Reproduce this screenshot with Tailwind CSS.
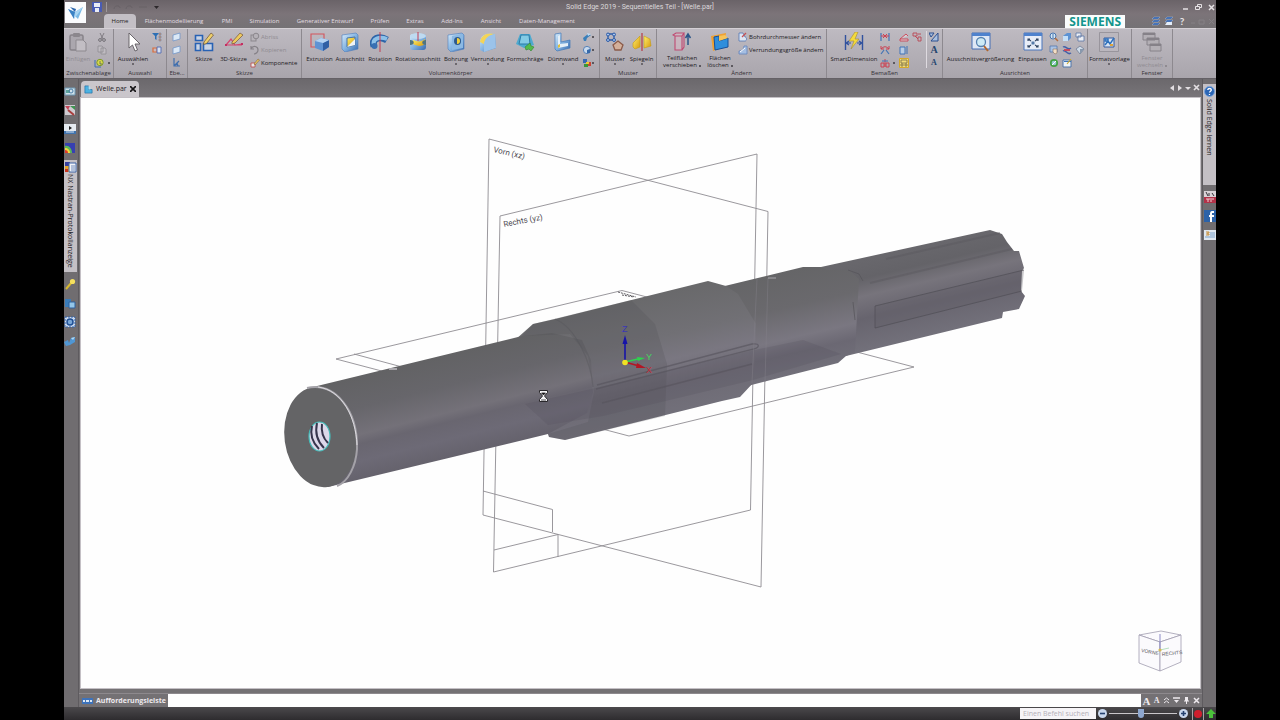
<!DOCTYPE html>
<html lang="de">
<head>
<meta charset="utf-8">
<meta name="viewport" content="width=device-width, initial-scale=1">
<title>Solid Edge 2019 - Sequentielles Teil - [Welle.par]</title>
<script src="https://cdn.jsdelivr.net/npm/@tailwindcss/browser@4"></script>
</head>
<body class="bg-black font-[Lato,'Liberation_Sans',sans-serif] text-[7px] leading-[8px] text-[#1d1a1e]">

<svg class="absolute size-0" aria-hidden="true">
  <defs>
    <linearGradient id="blue" x1="0" y1="0" x2="1" y2="1"><stop offset="0" stop-color="#d9ecfa"/><stop offset=".5" stop-color="#84b4e2"/><stop offset="1" stop-color="#3568ad"/></linearGradient>
    <linearGradient id="gold" x1="0" y1="0" x2="1" y2="1"><stop offset="0" stop-color="#fff06a"/><stop offset="1" stop-color="#d79a10"/></linearGradient>
  </defs>
  <symbol id="i-paste" viewBox="0 0 20 20"><rect x="2" y="3" width="13" height="15" rx="1.5" fill="#aba7ae" stroke="#878389" stroke-width="1.5"/><rect x="5" y="1" width="7" height="4" rx="1" fill="#8b878d"/><path d="M8 8h7l3 3v8H8z" fill="#c2bec4" stroke="#8d898f"/></symbol>
  <symbol id="i-cut" viewBox="0 0 10 10"><path d="M3 1l3 6M7 1L4 7" stroke="#807c82" fill="none"/><circle cx="3" cy="8" r="1.4" fill="none" stroke="#737076"/><circle cx="7" cy="8" r="1.4" fill="none" stroke="#737076"/></symbol>
  <symbol id="i-copy" viewBox="0 0 10 10"><path d="M1 1h4l1 1v5H1zM4 3h4l1 1v5H4z" fill="#bfbbc1" stroke="#918d93" stroke-width=".8"/></symbol>
  <symbol id="i-brush" viewBox="0 0 10 10"><path d="M1 2v7h6" fill="none" stroke="#3d6cb4"/><circle cx="6" cy="4.500" r="3.200" fill="#d9d84a" stroke="#7d9a2c"/><path d="M6 3v3h2" stroke="#456" fill="none" stroke-width=".7"/></symbol>
  <symbol id="i-arrow" viewBox="0 0 20 20"><path d="M6 1v15l3.500-3 2.500 6 2.500-1-2.500-6h5z" fill="#fff" stroke="#5d595f" stroke-width=".9"/></symbol>
  <symbol id="i-filter" viewBox="0 0 10 10"><path d="M0 1h7L4.500 4v4L3 7V4z" fill="#2c6fb5"/><path d="M7 1h2v2H7zM7 4h2v2H7zM7 7h2v2H7z" fill="#d69a6e" stroke="#6378a4" stroke-width=".5"/></symbol>
  <symbol id="i-range" viewBox="0 0 10 10"><path d="M1 3h4v4H1z" fill="#c9b9bd" stroke="#db6d3a" stroke-width="1.200"/><path d="M5 2h4v6H5z" fill="#d9e0ee" stroke="#5b72b4"/></symbol>
  <symbol id="i-plane" viewBox="0 0 10 10"><path d="M1 3l7-2v6L1 9z" fill="#dbe8f6" stroke="#7196c8" stroke-width=".8"/></symbol>
  <symbol id="i-axes" viewBox="0 0 10 10"><path d="M2 0v8h6M2 8l5-5M5 5l1 3" fill="none" stroke="#416fae" stroke-width="1.200"/></symbol>
  <symbol id="i-sketch" viewBox="0 0 20 20"><path d="M1.500 3.500h7v5h-7zM1.500 11.500h5v7h-5zM9.500 11.500h9v7h-9z" fill="#c8d3e4" stroke="#2862b4" stroke-width="1.600"/><path d="M10 10l7-9 2.500 2-7 8.500-3 1z" fill="#efd06b" stroke="#695038" stroke-width=".7"/></symbol>
  <symbol id="i-sketch3" viewBox="0 0 20 20"><path d="M2 13l5-6 4 6 7-1M2 13h16" fill="none" stroke="#d5466f" stroke-width="1.200"/><path d="M1 12h2v2H1zM17 11h2v2h-2z" fill="#c32f63"/><path d="M8 10l8-9 3 2-8 8-3 1z" fill="#edc95d" stroke="#72543b" stroke-width=".7"/></symbol>
  <symbol id="i-ghost" viewBox="0 0 10 10"><rect x="1" y="3" width="5" height="6" fill="#b7b3b9" stroke="#8b878d"/><circle cx="6" cy="4" r="2.800" fill="#b5b1b7" stroke="#8b878d"/></symbol>
  <symbol id="i-ghost2" viewBox="0 0 10 10"><path d="M1 4c2-4 7-3 7 1 0 2-2 4-4 4M1 1v3h3" fill="none" stroke="#858187" stroke-width="1.200"/></symbol>
  <symbol id="i-comp" viewBox="0 0 10 10"><path d="M1 5h4v4H1z" fill="#e9e7e9" stroke="#bc4a4a" stroke-width=".8"/><path d="M4 6l4-5 1.500 1L5 7z" fill="#edc95d" stroke="#72543b" stroke-width=".5"/></symbol>
  <symbol id="i-extrude" viewBox="0 0 20 20"><path d="M1 2h13v13H1z" fill="none" stroke="#d4545c" stroke-width="1.100"/><path d="M5 9l6-3 8 2v7l-6 4-8-3z" fill="#5f93d3"/><path d="M13 11l6-3v7l-6 4z" fill="#2f5fa4"/><path d="M5 9l6-3 8 2-6 3z" fill="#b3d2f1"/></symbol>
  <symbol id="i-cutout" viewBox="0 0 20 20"><path d="M2 3l14-2 2 2v14l-13 3-3-3z" fill="url(#blue)" stroke="#4c7cbd" stroke-width=".6"/><path d="M7 6l8-1v8l-8 2z" fill="url(#gold)" stroke="#4773a8"/><path d="M7 15l8-8v6z" fill="#eef3f8"/></symbol>
  <symbol id="i-revolve" viewBox="0 0 20 20"><path d="M4 14C1 7 9 3 17 8" stroke="#2c65a9" stroke-width="7" fill="none"/><path d="M4 13C2 7 9 4 17 7" stroke="#8dc1e8" stroke-width="4" fill="none"/><circle cx="4.500" cy="14" r="3" fill="#3971b3"/><path d="M10 0v20" stroke="#c23c55"/></symbol>
  <symbol id="i-revcut" viewBox="0 0 20 20"><rect x="2" y="2" width="16" height="16" rx="3" fill="url(#blue)"/><ellipse cx="10" cy="4" rx="8" ry="3" fill="#bedaf0"/><path d="M5 8c5 2 8 2 12-1v5c-4 3-8 2-12 0z" fill="url(#gold)"/><path d="M2 8c5 0 5 5 0 5zM18 8c-5 0-5 5 0 5z" fill="#4f7482"/><path d="M10 0v9" stroke="#c23c55"/></symbol>
  <symbol id="i-hole" viewBox="0 0 20 20"><path d="M2 3l14-2 2 2v14l-13 3-3-3z" fill="url(#blue)" stroke="#4c7cbd" stroke-width=".6"/><path d="M6 4l11-2v14L6 18z" fill="#8bb9e4"/><ellipse cx="11.500" cy="9" rx="3.500" ry="4" fill="#2e5a8c"/><path d="M11 6a3 3 0 010 6z" fill="#f2cf3c"/></symbol>
  <symbol id="i-round" viewBox="0 0 20 20"><path d="M2 18V9C3 3 9 0 17 2l1 14-12 4z" fill="url(#blue)"/><path d="M2 10C3 3 9 0 17 2 11 3 7 6 6 12z" fill="#f3d458"/><path d="M6 12c1-6 5-9 11-10l1 14-12 4z" fill="#9bc3ea"/></symbol>
  <symbol id="i-draft" viewBox="0 0 20 20"><path d="M5 2h10l4 11-10 3-8-4z" fill="#4faacf"/><path d="M6 3h8l1 9H4z" fill="#83cbe5" stroke="#2b7aa8"/><path d="M10 15l5-4 1 3 3 1-3 4-2-2-3 1z" fill="#54bb4b" stroke="#308533" stroke-width=".6"/></symbol>
  <symbol id="i-thin" viewBox="0 0 20 20"><path d="M2 2l6-1v9l9-2v8L4 19l-2-2z" fill="url(#blue)" stroke="#4278b7" stroke-width=".7"/><path d="M5 4l2-1v9l8-1v3l-10 2z" fill="#e4eff8"/><path d="M5 13l2-1v3l-2 1z" fill="#dfc13d"/></symbol>
  <symbol id="i-blob1" viewBox="0 0 10 10"><path d="M1 6l5-4 3 1-4 3-1 3-2 0z" fill="#397fba"/><path d="M5 1l4 1-3 2z" fill="#c1daf0"/></symbol>
  <symbol id="i-blob2" viewBox="0 0 10 10"><circle cx="5" cy="5" r="3.600" fill="#c9daed" stroke="#5782b8"/><path d="M5 5l3-1v4H5z" fill="#3669a9"/></symbol>
  <symbol id="i-blob3" viewBox="0 0 10 10"><path d="M1 1h4v4H1z" fill="#3769b2"/><path d="M5 4h4v4H5z" fill="#ca4435"/><path d="M2 6h4v3H2z" fill="#39963a"/><path d="M4 4h3v2H4z" fill="#eccb32"/></symbol>
  <symbol id="i-pattern" viewBox="0 0 20 20"><path d="M3 2h6v6H3z" fill="none" stroke="#2e5ca8" stroke-width="1.300"/><g fill="#a8c4ea" stroke="#2e5ca8"><circle cx="3" cy="2.500" r="1.500"/><circle cx="9" cy="2.500" r="1.500"/><circle cx="3" cy="8" r="1.500"/><circle cx="9" cy="8" r="1.500"/></g><path d="M13 9l5 4-2 5h-6l-2-5z" fill="#d3b09b" stroke="#8b5b4a" stroke-width="1.300"/></symbol>
  <symbol id="i-mirror" viewBox="0 0 20 20"><path d="M1 11l7-7v11l-5 2-2-2z" fill="url(#gold)" stroke="#c59a13" stroke-width=".6"/><path d="M12 4l6 3 1 7-7 2z" fill="url(#gold)" stroke="#c59a13" stroke-width=".6"/><path d="M10 1v18" stroke="#b83a44" stroke-width="1.200"/></symbol>
  <symbol id="i-moveface" viewBox="0 0 20 20"><path d="M1 3l3-2h8l-2 3v14H3V4zM3 4h7M12 1v14l-2 3" fill="#d9b7c3" fill-opacity=".5" stroke="#bf4a72" stroke-width="1.100"/><path d="M16 13V3M13.500 6L16 2l2.500 4" stroke="#2b5688" stroke-width="1.500" fill="none"/></symbol>
  <symbol id="i-delface" viewBox="0 0 20 20"><path d="M1 4l15-3-2 14-11 4z" fill="#efa132"/><path d="M4 5l5-1v5l9-3v9L5 18z" fill="#2f8edc" stroke="#17509a"/><path d="M9 9l9-3-3-3-6 1z" fill="#f6c45a"/></symbol>
  <symbol id="i-dia" viewBox="0 0 10 10"><path d="M1 1v8h6c2 0 2-4 0-4L5 1z" fill="#dce5f2" stroke="#5076b4" stroke-width=".8"/><path d="M4 5l4-4" stroke="#c65155" stroke-width="1.200"/></symbol>
  <symbol id="i-rad" viewBox="0 0 10 10"><path d="M1 9V6c3 0 5-2 5-5h3v8z" fill="#a5bee2" stroke="#6284bd" stroke-width=".8"/><path d="M2 7l5-4" stroke="#fff"/></symbol>
  <symbol id="i-smart" viewBox="0 0 20 20"><path d="M1.500 3v15M18.500 3v15" stroke="#31529e" stroke-width="1.400"/><path d="M2 11h5M13 11h5M5 9l-3 2 3 2M15 9l3 2-3 2" stroke="#31529e" stroke-width="1.200" fill="none"/><path d="M11 0L5 9h5l-3 8 8-10h-4l3-7z" fill="#f5db3b" stroke="#a28b36" stroke-width=".6"/></symbol>
  <symbol id="i-dim1" viewBox="0 0 10 10"><path d="M1 1v8M9 1v8" stroke="#4274b6" stroke-width="1.200"/><path d="M1 4h8M3 2l4 4M7 2L3 6" stroke="#cc4152" fill="none"/></symbol>
  <symbol id="i-dim2" viewBox="0 0 10 10"><path d="M1 9l3-4M9 9L6 5" stroke="#4274b6" stroke-width="1.200"/><path d="M1 4c3-3 5-3 8 0M1 1v3h3M9 1v3H6" stroke="#cc4152" fill="none"/></symbol>
  <symbol id="i-dim3" viewBox="0 0 10 10"><path d="M1 5h3v4H1zM6 5h3v4H6zM5 1v8" stroke="#cc4152" fill="none"/><path d="M2 3h6" stroke="#4274b6"/></symbol>
  <symbol id="i-dim4" viewBox="0 0 10 10"><path d="M1 7l6-5 2 2M1 7h8v2H1z" stroke="#cc4152" fill="#d8ced3" stroke-width=".9"/></symbol>
  <symbol id="i-dim5" viewBox="0 0 10 10"><path d="M1 2h5v7H1zM8 1v8" stroke="#3f72b7" fill="#b9cce4"/></symbol>
  <symbol id="i-dim6" viewBox="0 0 10 10"><path d="M.5.500h9v9h-9z" fill="#f2dc7a" stroke="#d5a828"/><path d="M2 2h6v3H2zM2 6h2v2H2zM6 6h2v2H6z" fill="none" stroke="#7a6c44" stroke-width=".8"/></symbol>
  <symbol id="i-dim7" viewBox="0 0 10 10"><path d="M1 1h4v3H1zM6 5h3v4H6zM3 4l3 3M6 2h3" stroke="#bb4552" fill="none" stroke-width=".9"/></symbol>
  <symbol id="i-tri" viewBox="0 0 10 10"><path d="M0 1h5L2 5zM9 1v8H2z" fill="#a8c0e0" stroke="#2d4f8e"/></symbol>
  <symbol id="i-zoomarea" viewBox="0 0 20 20"><path d="M1 1h18v16H1z" fill="#dfe8f5" stroke="#446fb5"/><path d="M1 1h18v3H1z" fill="#4f82cd"/><circle cx="10" cy="10" r="4.500" fill="#cdeaf5" stroke="#5681b0" stroke-width="1.300"/><path d="M13 14l4 5" stroke="#b1662d" stroke-width="2"/></symbol>
  <symbol id="i-fit" viewBox="0 0 20 20"><path d="M1 1h18v17H1z" fill="#e8edf7" stroke="#4b76bd"/><path d="M1 1h18v3H1z" fill="#4f82cd"/><path d="M5 9V7h2M15 9V7h-2M5 13v2h2M15 13v2h-2M5 7l3 2M15 7l-3 2M5 15l3-2M15 15l-3-2" stroke="#314562" stroke-width="1.100" fill="none"/><path d="M8.500 9.500h3v3h-3z" fill="#5579a7"/></symbol>
  <symbol id="i-lens" viewBox="0 0 10 10"><circle cx="4" cy="4" r="3" fill="#d5e8f5" stroke="#4774b0"/><path d="M6 6l3 3" stroke="#b36b3a" stroke-width="1.500"/><path d="M4 2v4" stroke="#4774b0"/></symbol>
  <symbol id="i-cube" viewBox="0 0 10 10"><path d="M1 4l4-3h4v5L6 9H1z" fill="#5c92d3"/><path d="M1 4h5v5H1z" fill="#c5dff7"/></symbol>
  <symbol id="i-wins" viewBox="0 0 10 10"><path d="M1 1h5v4H1zM3 4h6v5H3z" fill="#eceef4" stroke="#5874a4" stroke-width=".8"/></symbol>
  <symbol id="i-hand" viewBox="0 0 10 10"><path d="M1 1h7v6H1z" fill="#aac3e4" stroke="#5577ab" stroke-width=".8"/><path d="M4 4h4v4l-2 1-2-2z" fill="#f3dfc6" stroke="#8b705c" stroke-width=".6"/></symbol>
  <symbol id="i-sym" viewBox="0 0 10 10"><path d="M1 2c3-2 4 4 8 1M1 6c3-2 4 5 8 2" stroke="#425fa9" stroke-width="1.500" fill="none"/><path d="M2 5h6" stroke="#cf4254" stroke-width="1.800"/></symbol>
  <symbol id="i-diam" viewBox="0 0 10 10"><path d="M1 4l4-3 4 3-4 5z" fill="#cfdbe8" stroke="#64748c" stroke-width=".7"/><path d="M5 4l4 0-4 5z" fill="#8798ad"/></symbol>
  <symbol id="i-rot" viewBox="0 0 10 10"><circle cx="5" cy="5" r="3.200" fill="#9ccbd6" stroke="#42a245" stroke-width="1.700"/><path d="M3 7l4-4" stroke="#fff"/></symbol>
  <symbol id="i-note" viewBox="0 0 10 10"><path d="M1 2h8v7H1z" fill="#eff3f8" stroke="#4f75a8"/><path d="M2 3h7v1H2z" fill="#3e75bc"/><path d="M5 6l4-5" stroke="#cda72d" stroke-width="1.200"/></symbol>
  <symbol id="i-style" viewBox="0 0 20 20"><path d="M.5.500h19v19H.500z" fill="#bbb7be" stroke="#918d94" stroke-width=".8"/><path d="M5 6h10v9H5z" fill="#d8e3f2" stroke="#345b9f"/><path d="M6 13l3-4 2 3 4-6M6 7h3v2H6z" stroke="#2f72bd" fill="none" stroke-width="1.500"/><path d="M11 13h3" stroke="#e0a53a" stroke-width="2"/></symbol>
  <symbol id="i-windows" viewBox="0 0 20 20"><g fill="#b3afb5" stroke="#868289"><path d="M1 1h12v7H1zM5 6h12v7H5zM8 12h11v7H8z"/></g><path d="M1 1h12v2H1zM5 6h12v2H5zM8 12h11v2H8z" fill="#858188"/></symbol>
  <symbol id="i-part" viewBox="0 0 10 10"><path d="M1 1h4v4h4v4H1z" fill="#4cb2e2" stroke="#1c6aa3" stroke-width=".7"/><path d="M5 1l2 1v3H5z" fill="#a8e0f5"/></symbol>
</svg>

<div class="mx-16 flex min-h-screen flex-col bg-[#747174]">

  <!-- Title bar and ribbon tabs -->
  <header class="relative bg-linear-to-b from-[#6a6368] via-[#7c7479] to-[#757275]">
    <svg class="absolute top-[2px] left-px size-[21px]" viewBox="0 0 21 21" role="img" aria-label="Solid Edge"><rect width="21" height="21" fill="#fafbfd"/><path d="M3 7l7 3 8-5-5 12z" fill="#79b9e6"/><path d="M3 7l7 3-1 7z" fill="#3b82c4"/><path d="M10 10l8-5-9 12z" fill="#a9d5f2"/><path d="M5 5l6 2-1 3z" fill="#2c67ad"/></svg>
    <div class="grid h-[14px] grid-cols-[1fr_auto_1fr] items-center">
      <div class="flex items-center gap-1 pl-7">
        <button aria-label="Speichern"><svg class="size-[10px]" viewBox="0 0 10 10"><path d="M0 0h10v10H1L0 9z" fill="#4a5cb4"/><path d="M2 1h6v4H2zM3 6h4v4H3z" fill="#e9ecf7"/></svg></button>
        <span class="h-[10px] w-px bg-[#9d979b]"></span>
        <svg class="h-[8px] w-[39px]" viewBox="0 0 39 8"><path d="M3 6c0-4 6-4 6-1M15 6c0-4 6-4 6-1M28 4h8" fill="none" stroke="#686267"/></svg>
        <svg class="h-[3px] w-[5px]" viewBox="0 0 5 3"><path d="M0 0h5L2.500 3z" fill="#2c282b"/></svg>
      </div>
      <h1 class="font-[Roboto,sans-serif] text-[#dcd8db]">Solid Edge 2019 - Sequentielles Teil - [Welle.par]</h1>
      <div class="flex justify-end gap-[6px] pr-px text-[#e6e2e5]">
        <button aria-label="Minimieren"><svg class="size-[7px]" viewBox="0 0 7 7"><path d="M1 5h5" stroke="currentColor" stroke-width="1.500"/></svg></button>
        <button aria-label="Wiederherstellen"><svg class="size-[7px]" viewBox="0 0 7 7"><path d="M2.500 2V.500h4v3H5M.500 2.500h4v3h-4z" fill="none" stroke="currentColor"/></svg></button>
        <button aria-label="Schließen"><svg class="size-[7px]" viewBox="0 0 7 7"><path d="M1 1l5 5M6 1L1 6" stroke="currentColor" stroke-width="1.500"/></svg></button>
      </div>
    </div>
    <div class="flex h-[14px] items-stretch pl-10 text-[#e2dee2]">
      <nav class="flex font-['Open_Sans',sans-serif] text-[6px] whitespace-nowrap" aria-label="Menüband">
        <button class="w-8 rounded-t-sm bg-[#c3bfc5] text-[#1f1c20]">Home</button>
        <button class="w-[76px]">Flächenmodellierung</button>
        <button class="w-[30px]">PMI</button>
        <button class="w-[45px]">Simulation</button>
        <button class="w-[76px]">Generativer Entwurf</button>
        <button class="w-[34px]">Prüfen</button>
        <button class="w-[36px]">Extras</button>
        <button class="w-[38px]">Add-Ins</button>
        <button class="w-[40px]">Ansicht</button>
        <button class="w-[72px]">Daten-Management</button>
      </nav>
      <div class="ml-auto flex items-center gap-[3px]">
        <span class="mr-[23px] flex h-[13px] items-center bg-[#fbfdfd] px-1 font-['Open_Sans',sans-serif] text-[12px] leading-[13px] font-bold text-[#12958c]">SIEMENS</span>
        <svg class="size-[10px]" viewBox="0 0 10 10"><path d="M3 1h6L7 3H1zM3 4h6L7 6H1zM3 7h6L7 9H1z" fill="#2c5eac" stroke="#b7cae7" stroke-width=".4"/></svg>
        <svg class="size-[10px]" viewBox="0 0 10 10"><path d="M3 1h6L7 3H1zM3 4h6L7 6H1z" fill="#2c5eac" stroke="#b7cae7" stroke-width=".4"/><path d="M3 6h5v3H1z" fill="#e4edf8"/></svg>
        <button class="w-[10px] text-[10px] font-bold text-[#e9e6e9]" aria-label="Hilfe">?</button>
        <svg class="h-[8px] w-[26px]" viewBox="0 0 26 8"><path d="M1 6h4M9 3h5v4H9zM19 2l5 5M24 2l-5 5" stroke="#858185" fill="none"/></svg>
      </div>
    </div>
  </header>

  <!-- Ribbon -->
  <section class="flex h-[51px] border-t border-[#d4d0d5] border-b border-b-[#656166] bg-linear-to-b from-[#bebac1] to-[#a9a5ac] font-['Open_Sans',sans-serif] text-[6px] whitespace-nowrap" aria-label="Home">
    <div class="flex w-[50px] flex-col border-r border-[#8d898f]">
      <div class="flex min-h-0 flex-1">
        <button class="flex w-7 flex-col items-center pt-[3px] text-[#8f8b91]"><svg class="mb-[3px] size-5 shrink-0"><use href="#i-paste"/></svg>Einfügen</button>
        <div class="flex flex-col items-center gap-[3px] pt-[3px] pl-[2px]">
          <button aria-label="Ausschneiden"><svg class="size-[10px]"><use href="#i-cut"/></svg></button>
          <button aria-label="Kopieren"><svg class="size-[10px]"><use href="#i-copy"/></svg></button>
          <button class="flex items-center gap-1" aria-label="Format"><svg class="size-[10px]"><use href="#i-brush"/></svg><span class="size-[2px] bg-[#5c585e]"></span></button>
        </div>
      </div>
      <h2 class="text-center leading-[10px] text-[#343036]">Zwischenablage</h2>
    </div>
    <div class="flex w-[53px] flex-col border-r border-[#8d898f]">
      <div class="flex min-h-0 flex-1">
        <button class="flex w-[38px] flex-col items-center pt-[3px]"><svg class="mb-[3px] size-5 shrink-0"><use href="#i-arrow"/></svg>Auswählen<span class="size-[2px] bg-[#6c686e]"></span></button>
        <div class="flex flex-col gap-[3px] pt-[3px]">
          <button aria-label="Auswahlfilter"><svg class="size-[10px]"><use href="#i-filter"/></svg></button>
          <button aria-label="Auswahlbereich"><svg class="size-[10px]"><use href="#i-range"/></svg></button>
        </div>
      </div>
      <h2 class="text-center leading-[10px] text-[#343036]">Auswahl</h2>
    </div>
    <div class="flex w-[21px] flex-col border-r border-[#8d898f]">
      <div class="flex min-h-0 flex-1 flex-col items-center gap-[3px] pt-[3px]">
        <button aria-label="Ebene"><svg class="size-[10px]"><use href="#i-plane"/></svg></button>
        <button aria-label="Parallele Ebene"><svg class="size-[10px]"><use href="#i-plane"/></svg></button>
        <button aria-label="Koordinatensystem"><svg class="size-[10px]"><use href="#i-axes"/></svg></button>
      </div>
      <h2 class="text-center leading-[10px] text-[#343036]">Ebe...</h2>
    </div>
    <div class="flex w-[114px] flex-col border-r border-[#8d898f]">
      <div class="flex min-h-0 flex-1 pl-px">
        <button class="flex w-[30px] flex-col items-center pt-[3px]"><svg class="mb-[3px] size-5 shrink-0"><use href="#i-sketch"/></svg>Skizze</button>
        <button class="flex w-[29px] flex-col items-center pt-[3px]"><svg class="mb-[3px] size-5 shrink-0"><use href="#i-sketch3"/></svg>3D-Skizze</button>
        <div class="flex flex-col gap-[3px] pt-[3px] pl-[2px]">
          <button class="flex items-center gap-px text-[#8f8b91]"><svg class="size-[10px]"><use href="#i-ghost"/></svg>Abriss</button>
          <button class="flex items-center gap-px text-[#8f8b91]"><svg class="size-[10px]"><use href="#i-ghost2"/></svg>Kopieren</button>
          <button class="flex items-center gap-px"><svg class="size-[10px]"><use href="#i-comp"/></svg>Komponente</button>
        </div>
      </div>
      <h2 class="text-center leading-[10px] text-[#343036]">Skizze</h2>
    </div>
    <div class="flex w-[298px] flex-col border-r border-[#8d898f]">
      <div class="flex min-h-0 flex-1 pl-[2px]">
        <button class="flex w-[31px] flex-col items-center pt-[3px]"><svg class="mb-[3px] size-5 shrink-0"><use href="#i-extrude"/></svg>Extrusion</button>
        <button class="flex w-[30px] flex-col items-center pt-[3px]"><svg class="mb-[3px] size-5 shrink-0"><use href="#i-cutout"/></svg>Ausschnitt</button>
        <button class="flex w-[30px] flex-col items-center pt-[3px]"><svg class="mb-[3px] size-5 shrink-0"><use href="#i-revolve"/></svg>Rotation</button>
        <button class="flex w-[46px] flex-col items-center pt-[3px]"><svg class="mb-[3px] size-5 shrink-0"><use href="#i-revcut"/></svg>Rotationsschnitt</button>
        <button class="flex w-[30px] flex-col items-center pt-[3px]"><svg class="mb-[3px] size-5 shrink-0"><use href="#i-hole"/></svg>Bohrung<span class="size-[2px] bg-[#6c686e]"></span></button>
        <button class="flex w-[33px] flex-col items-center pt-[3px]"><svg class="mb-[3px] size-5 shrink-0"><use href="#i-round"/></svg>Verrundung<span class="size-[2px] bg-[#6c686e]"></span></button>
        <button class="flex w-[42px] flex-col items-center pt-[3px]"><svg class="mb-[3px] size-5 shrink-0"><use href="#i-draft"/></svg>Formschräge</button>
        <button class="flex w-[34px] flex-col items-center pt-[3px]"><svg class="mb-[3px] size-5 shrink-0"><use href="#i-thin"/></svg>Dünnwand<span class="size-[2px] bg-[#6c686e]"></span></button>
        <div class="flex flex-col gap-[3px] pt-[3px] pl-[2px]">
          <button class="flex items-center" aria-label="Hinzufügen"><svg class="size-[10px]"><use href="#i-blob1"/></svg><span class="size-[2px] bg-[#5c585e]"></span></button>
          <button class="flex items-center" aria-label="Gewinde"><svg class="size-[10px]"><use href="#i-blob2"/></svg><span class="size-[2px] bg-[#5c585e]"></span></button>
          <button class="flex items-center" aria-label="Boolesch"><svg class="size-[10px]"><use href="#i-blob3"/></svg><span class="size-[2px] bg-[#5c585e]"></span></button>
        </div>
      </div>
      <h2 class="text-center leading-[10px] text-[#343036]">Volumenkörper</h2>
    </div>
    <div class="flex w-[57px] flex-col border-r border-[#8d898f]">
      <div class="flex min-h-0 flex-1 pl-[2px]">
        <button class="flex w-[26px] flex-col items-center pt-[3px]"><svg class="mb-[3px] size-5 shrink-0"><use href="#i-pattern"/></svg>Muster<span class="size-[2px] bg-[#6c686e]"></span></button>
        <button class="flex w-[27px] flex-col items-center pt-[3px]"><svg class="mb-[3px] size-5 shrink-0"><use href="#i-mirror"/></svg>Spiegeln<span class="size-[2px] bg-[#6c686e]"></span></button>
      </div>
      <h2 class="text-center leading-[10px] text-[#343036]">Muster</h2>
    </div>
    <div class="flex w-[170px] flex-col border-r border-[#8d898f]">
      <div class="flex min-h-0 flex-1 pl-[3px] leading-[7px]">
        <button class="flex w-[44px] flex-col items-center pt-[3px]"><svg class="mb-[3px] size-5 shrink-0"><use href="#i-moveface"/></svg><span>Teilflächen</span><span class="flex items-center gap-[2px]">verschieben<span class="size-[2px] bg-[#5c585e]"></span></span></button>
        <button class="flex w-[32px] flex-col items-center pt-[3px]"><svg class="mb-[3px] size-5 shrink-0"><use href="#i-delface"/></svg><span>Flächen</span><span class="flex items-center gap-[2px]">löschen<span class="size-[2px] bg-[#5c585e]"></span></span></button>
        <div class="flex flex-col gap-[3px] pt-[3px] pl-[2px]">
          <button class="flex items-center gap-px"><svg class="size-[10px]"><use href="#i-dia"/></svg>Bohrdurchmesser ändern</button>
          <button class="flex items-center gap-px"><svg class="size-[10px]"><use href="#i-rad"/></svg>Verrundungsgröße ändern</button>
        </div>
      </div>
      <h2 class="text-center leading-[10px] text-[#343036]">Ändern</h2>
    </div>
    <div class="flex w-[116px] flex-col border-r border-[#8d898f]">
      <div class="flex min-h-0 flex-1 pl-[2px]">
        <button class="flex w-[50px] flex-col items-center pt-[3px]"><svg class="mb-[3px] size-5 shrink-0"><use href="#i-smart"/></svg>SmartDimension</button>
        <div class="grid grid-cols-[19px_13px_12px] content-start gap-y-[3px] pt-[3px] pl-px">
          <button aria-label="Abstand"><svg class="size-[10px]"><use href="#i-dim1"/></svg></button>
          <button aria-label="Fase"><svg class="size-[10px]"><use href="#i-dim4"/></svg></button>
          <button aria-label="Zuordnen"><svg class="size-[10px]"><use href="#i-dim7"/></svg></button>
          <button aria-label="Winkel"><svg class="size-[10px]"><use href="#i-dim2"/></svg></button>
          <button class="col-span-2" aria-label="Ausrichten"><svg class="size-[10px]"><use href="#i-dim5"/></svg></button>
          <button class="flex items-center gap-[3px]" aria-label="Koordinaten"><svg class="size-[10px]"><use href="#i-dim3"/></svg><span class="size-[2px] bg-[#5c585e]"></span></button>
          <button aria-label="Achse"><svg class="size-[10px]"><use href="#i-dim6"/></svg></button>
        </div>
        <div class="mt-[2px] ml-[2px] flex flex-col items-center gap-[3px] border-l border-[#dedae0] pt-px pl-[2px] font-['Liberation_Serif',serif] text-[10px] leading-[10px] font-bold text-[#24446f]">
          <button aria-label="Textstil"><svg class="size-[10px]"><use href="#i-tri"/></svg></button>
          <button>A</button>
          <button class="text-[8px]">A</button>
        </div>
      </div>
      <h2 class="text-center leading-[10px] text-[#343036]">Bemaßen</h2>
    </div>
    <div class="flex w-[145px] flex-col border-r border-[#8d898f]">
      <div class="flex min-h-0 flex-1 pl-[2px]">
        <button class="flex w-[71px] flex-col items-center pt-[3px]"><svg class="mb-[3px] size-5 shrink-0"><use href="#i-zoomarea"/></svg>Ausschnittvergrößerung</button>
        <button class="flex w-[33px] flex-col items-center pt-[3px]"><svg class="mb-[3px] size-5 shrink-0"><use href="#i-fit"/></svg>Einpassen</button>
        <div class="grid grid-cols-3 content-start gap-[3px] pt-[3px]">
          <button aria-label="Zoom"><svg class="size-[10px]"><use href="#i-lens"/></svg></button>
          <button aria-label="Schattiert"><svg class="size-[10px]"><use href="#i-cube"/></svg></button>
          <button aria-label="Fenster"><svg class="size-[10px]"><use href="#i-wins"/></svg></button>
          <button aria-label="Verschieben"><svg class="size-[10px]"><use href="#i-hand"/></svg></button>
          <button aria-label="Skizzenansicht"><svg class="size-[10px]"><use href="#i-sym"/></svg></button>
          <button aria-label="Perspektive"><svg class="size-[10px]"><use href="#i-diam"/></svg></button>
          <button aria-label="Drehen"><svg class="size-[10px]"><use href="#i-rot"/></svg></button>
          <button aria-label="Ansicht bearbeiten"><svg class="size-[10px]"><use href="#i-note"/></svg></button>
        </div>
      </div>
      <h2 class="text-center leading-[10px] text-[#343036]">Ausrichten</h2>
    </div>
    <div class="flex w-[44px] flex-col items-center border-r border-[#8d898f]">
      <button class="flex flex-col items-center pt-[3px]"><svg class="mb-[3px] size-5 shrink-0"><use href="#i-style"/></svg>Formatvorlage<span class="size-[2px] bg-[#6c686e]"></span></button>
    </div>
    <div class="flex w-[41px] flex-col border-r border-[#8d898f]">
      <button class="flex min-h-0 flex-1 flex-col items-center pt-[3px] leading-[7px] text-[#8f8b91]"><svg class="mb-[3px] size-5 shrink-0"><use href="#i-windows"/></svg><span>Fenster</span><span class="flex items-center gap-[2px]">wechseln<span class="size-[2px] bg-[#8f8b91]"></span></span></button>
      <h2 class="text-center leading-[10px] text-[#343036]">Fenster</h2>
    </div>
  </section>

  <div class="flex flex-1">
    <!-- Left docking strip -->
    <aside class="flex w-[15px] flex-col items-start gap-[6px] border-r border-[#5e5b5f] bg-[#706d70] pt-[6px]">
      <button aria-label="Bibliothek"><svg class="size-[12px]" viewBox="0 0 12 12"><path d="M1 3h10v7H1z" fill="#cfe2ea" stroke="#6f9ab5"/><path d="M2 5h4v3H2z" fill="#5ba39a"/><circle cx="7" cy="6" r="2" fill="none" stroke="#4b7fab"/></svg></button>
      <button class="pt-px" aria-label="Familie"><svg class="size-[12px]" viewBox="0 0 12 12"><path d="M1 1h10v10H1z" fill="#cfcbd1"/><path d="M1 2h5l-2 4z" fill="#c34558"/><path d="M6 2h5v4z" fill="#3f9452"/><path d="M4 6l6 5" stroke="#a83e3e" stroke-width="2"/></svg></button>
      <button class="pt-px" aria-label="Sensoren"><svg class="size-[12px]" viewBox="0 0 12 12"><path d="M0 1h12v7H0z" fill="#e6ebf1"/><path d="M0 8h12v3H0z" fill="#4274ae"/><path d="M5 3l3 2-3 2z" fill="#222"/><path d="M2 9h8" stroke="#cfe0f0"/></svg></button>
      <button class="pt-px" aria-label="Simulation"><svg class="size-[12px]" viewBox="0 0 12 12"><path d="M1 1h10v10H1z" fill="#3740b0"/><path d="M1 4c4-1 7 3 7 7H1z" fill="#59b75a"/><path d="M1 6c3 0 5 2 5 5H1z" fill="#f2d840"/><path d="M1 8c2 0 3 1 3 3H1z" fill="#db3a28"/></svg></button>
      <button class="flex min-h-[112px] w-[13px] flex-col items-center gap-px bg-[#c4c0c5] pt-px text-[8px] leading-[13px]"><svg class="size-[12px]" viewBox="0 0 12 12"><path d="M0 1h5v10H0z" fill="#3740a0"/><path d="M0 5h4v6H0z" fill="#e4a52c"/><path d="M0 8h3v3H0z" fill="#c8341f"/><path d="M4 2h7v9H4z" fill="#f1f3f8" stroke="#3c63a5"/><path d="M6 5h4M6 7h4M6 9h4" stroke="#3c63a5" stroke-width=".7"/></svg><span class="font-['Open_Sans',sans-serif] text-[7px] whitespace-nowrap [writing-mode:vertical-rl]">NX Nastran-Protokollanzeige</span></button>
      <button aria-label="Schlüssel"><svg class="size-[12px]" viewBox="0 0 12 12"><path d="M2 11l6-7" stroke="#d8b92e" stroke-width="2"/><circle cx="8.500" cy="3.500" r="2.600" fill="#f4df5e"/></svg></button>
      <button class="pt-px" aria-label="Teile"><svg class="size-[12px]" viewBox="0 0 12 12"><path d="M1 2h6v8H1z" fill="#3a7cb9"/><path d="M5 5h6v6H5z" fill="#94c6e9" stroke="#2e619d"/></svg></button>
      <button class="pt-px" aria-label="Suchen"><svg class="size-[12px]" viewBox="0 0 12 12"><path d="M1 1h10v10H1z" fill="#c8d9ef" stroke="#2f61a9" stroke-dasharray="2 1"/><circle cx="6" cy="6" r="3" fill="#78a7d8" stroke="#1f4f95" stroke-width="1.500"/></svg></button>
      <button class="pt-px" aria-label="Baugruppe"><svg class="size-[12px]" viewBox="0 0 12 12"><path d="M0 7l4-2 1 3 2-5 4-1v5l-5 3-4 1z" fill="#4f96d4"/><path d="M7 3l4-1-2 3z" fill="#b1d8f3"/></svg></button>
    </aside>

    <main class="flex min-w-0 flex-1 flex-col">
      <div class="flex h-[18px] items-end bg-linear-to-b from-[#6b686c] to-[#787579] pl-[2px]">
        <div class="flex h-4 items-center gap-[3px] rounded-t-sm bg-[#cac6cb] px-[3px] font-['Open_Sans',sans-serif] text-[7px]"><svg class="size-[9px]"><use href="#i-part"/></svg>Welle.par<button aria-label="Dokument schließen"><svg class="size-[6px]" viewBox="0 0 6 6"><path d="M0 0l6 6M6 0L0 6" stroke="#161416" stroke-width="1.600"/></svg></button></div>
        <div class="mr-[2px] mb-[6px] ml-auto flex items-center gap-[2px] text-[#e2dee2]">
          <button aria-label="Zurück"><svg class="size-[6px]" viewBox="0 0 6 6"><path d="M5 0v6L1 3z" fill="currentColor"/></svg></button>
          <button aria-label="Vor"><svg class="size-[6px]" viewBox="0 0 6 6"><path d="M1 0v6l4-3z" fill="currentColor"/></svg></button>
          <button aria-label="Liste"><svg class="size-[6px]" viewBox="0 0 6 6"><path d="M0 2h6L3 5z" fill="currentColor"/></svg></button>
          <button aria-label="Schließen"><svg class="size-[7px]" viewBox="0 0 7 7"><path d="M1 1l5 5M6 1L1 6" stroke="currentColor" stroke-width="1.700"/></svg></button>
        </div>
      </div>

      <!-- Model view -->
      <div class="mx-px flex-1 bg-[#fefefe] outline -outline-offset-1 outline-[#c4c0c5]">
        <svg class="block h-auto w-full" viewBox="80 97 1121 592" role="img" aria-label="Modell der Welle mit Referenzebenen">
          <defs>
            <linearGradient id="front" gradientUnits="userSpaceOnUse" x1="430" y1="358" x2="455" y2="459"><stop offset="0" stop-color="#626264"/><stop offset=".3" stop-color="#67666b"/><stop offset=".55" stop-color="#747179"/><stop offset=".64" stop-color="#696670"/><stop offset=".8" stop-color="#6d6a76"/><stop offset="1" stop-color="#64616b"/></linearGradient>
            <linearGradient id="mid" gradientUnits="userSpaceOnUse" x1="630" y1="300" x2="657" y2="418"><stop offset="0" stop-color="#69696b"/><stop offset=".35" stop-color="#717075"/><stop offset=".55" stop-color="#7a7781"/><stop offset=".75" stop-color="#6d6a74"/><stop offset="1" stop-color="#72707a"/></linearGradient>
            <linearGradient id="rear" gradientUnits="userSpaceOnUse" x1="780" y1="272" x2="803" y2="372"><stop offset="0" stop-color="#656567"/><stop offset=".35" stop-color="#6a696d"/><stop offset=".65" stop-color="#7a7781"/><stop offset=".8" stop-color="#6b6873"/><stop offset="1" stop-color="#716f79"/></linearGradient>
            <linearGradient id="spline" gradientUnits="userSpaceOnUse" x1="920" y1="247" x2="940" y2="332"><stop offset="0" stop-color="#68676c"/><stop offset=".2" stop-color="#646368"/><stop offset=".4" stop-color="#77747c"/><stop offset=".65" stop-color="#67646e"/><stop offset="1" stop-color="#72707a"/></linearGradient>
          </defs>
          <g fill="none" stroke="#8f8c92" stroke-width=".9">
            <path d="M489 139L768 211.500 761 587 483 515zM483 491l69.500 18.500V532"/>
            <path d="M500 216l257-62-6.500 356L493.500 572zM494 550l64-15.500V557"/>
            <path d="M336 359l286-68.500L914 367 629 436zM354 354l63 17"/>
          </g>
          <path d="M821 267L990 230l12 4 5 8 7 9 5 0 5 17-2 3-1 20 4 5-6 13-16 3-1 6-156 38-16-4z" fill="url(#spline)"/>
          <path d="M700 292l103-25h18l6 3 22 0 10 9-4 73-9 4-8 7-110 28z" fill="url(#rear)"/>
          <path d="M515 340l18-16 22-5L708 281l18 5 12 8 18 30-2 58-14 15-18 4-157 39-16-3z" fill="url(#mid)"/>
          <path d="M315 386.500L522 336l30-3 30 7 9 20 2 33-6 20-39 21-220 53z" fill="url(#front)"/>
          <path d="M522 336l11-12 98-24 24 24 12 40-2 52-100 24-16-3-1-3 40-12 6-30-6-36-18-22z" fill="#4c4c50" opacity=".2"/>
          <path d="M555 319c20 8 36 42 38 68" fill="none" stroke="#55545a" stroke-width="1.200" opacity=".4"/>
          <path d="M525 404l71-16 154-37 53-11 38 14-88 26-150 36-55 9z" fill="#504e59" opacity=".22"/>
          <path d="M597 385l155-41c8-1 8 3 2 5l-158 40M602 403l150-39" fill="none" stroke="#57555d" stroke-width="1.300" opacity=".65"/>
          <path d="M848 270l11 4 4 7M853 302l2 18" fill="none" stroke="#55545a" opacity=".7"/>
          <path d="M1024 270L875 306v22l147-37" fill="#605e67" fill-opacity=".35" stroke="#504e56" stroke-opacity=".7"/>
          <path d="M870 283L1012 249M886 259l114-26" fill="none" stroke="#5b5960" stroke-width="2" opacity=".5"/>
          <path d="M768 278l-3 104M757 279l-5 104" stroke="#85828b" stroke-width=".7" opacity=".6"/>
          <ellipse cx="320.500" cy="437" rx="36" ry="50.500" transform="rotate(-8 320.500 437)" fill="#646466"/>
          <path d="M307 388c28-6 51 22 50 61-1 17-9 33-20 37" fill="none" stroke="#a4a2a8" stroke-width="2"/>
          <path d="M318 387c24 3 38 30 39 58" fill="none" stroke="#dddbe0" stroke-width="1"/>
          <ellipse cx="319.500" cy="436.500" rx="10.500" ry="14.500" fill="#dcd8ea" stroke="#43bcb9" stroke-width="1.200"/>
          <path d="M312 426c-2 8 0 16 7 23M317 423c-2 9 0 18 7 25M322 424c-1 7 1 14 6 19" fill="none" stroke="#36344c" stroke-width="2"/>
          <path d="M389 369h8" stroke="#a9a7ac" stroke-width="2"/><path d="M768 278h8" stroke="#a9a7ac"/>
          <path d="M618 292l18 5M622 295l12 2" stroke="#5b595e" stroke-dasharray="2 1"/>
          <g font-family="Roboto,sans-serif" font-size="8" fill="#4f4c53">
            <text transform="translate(493 152) rotate(13)">Vorn (xz)</text>
            <text transform="translate(504 227) rotate(-11)">Rechts (yz)</text>
          </g>
          <path d="M625 361v-20" stroke="#1714a8" stroke-width="1.600"/><path d="M625 335l2.500 9h-5z" fill="#1714a8"/>
          <path d="M625 362l13-3" stroke="#2ed24e" stroke-width="1.400"/><path d="M645 358l-8-1 1 4z" fill="#2ed24e"/>
          <path d="M625 362l14 4" stroke="#b31624" stroke-width="1.600"/><path d="M646 368l-9-5-1 5z" fill="#b31624"/>
          <circle cx="625" cy="362.500" r="2.800" fill="#f0e322"/>
          <g font-family="'Liberation Sans',sans-serif" font-size="9"><text x="622" y="332" fill="#3a37b4">Z</text><text x="646" y="360" fill="#47d35f">Y</text><text x="646" y="373" fill="#c52c38">X</text></g>
          <path d="M539.500 390.500h8v2l-3 3.500 3 3.500v2h-8v-2l3-3.500-3-3.500z" fill="#f4f3f5" stroke="#29272b"/><path d="M541 400h5M541.500 393h4l-2 2z" stroke="#29272b" stroke-width=".8"/>
          <g stroke="#a19db0" stroke-width=".8" fill="#fbfafd"><path d="M1139 635l22-4 20 4-21 7z"/><path d="M1139 635l21 7v29l-21-8z"/><path d="M1160 642l21-7v27l-21 9z"/></g>
          <path d="M1160 634v16" stroke="#8b89c6"/><path d="M1160 650l9-2" stroke="#b5dec0"/><circle cx="1160" cy="650" r="1.600" fill="#d6bb54"/>
          <g font-family="'Liberation Sans',sans-serif" font-size="5" fill="#5c5962"><text transform="translate(1141 652) rotate(10)">VORNE</text><text transform="translate(1162 656) rotate(-6)">RECHTS</text></g>
        </svg>
      </div>

      <!-- Prompt bar -->
      <div class="mt-1 flex h-[14px] items-center border-t border-[#8d898d] text-[#eeeaee]">
        <svg class="mr-[3px] ml-[3px] h-[6px] w-[11px]" viewBox="0 0 11 6"><path d="M0 0h11v6H0z" fill="#3e73bb"/><path d="M1 2h2v2H1zM4 2h3v2H4zM8 2h2v2H8z" fill="#dce9f6"/></svg>
        <label for="prompt" class="pr-[2px] font-['Open_Sans',sans-serif] text-[7px] font-bold">Aufforderungsleiste</label>
        <input id="prompt" class="h-[13px] min-w-0 flex-1 bg-[#fefefe] text-[#2b282c]">
        <div class="flex w-[61px] items-center justify-around font-['Liberation_Serif',serif] font-bold">
          <button class="text-[11px]">A</button><button class="text-[8px]">A</button>
          <button aria-label="Einklappen"><svg class="size-[7px]" viewBox="0 0 7 7"><path d="M1 3l2.500-2L6 3M1 6l2.500-2L6 6" fill="none" stroke="currentColor"/></svg></button>
          <button aria-label="Optionen"><svg class="size-[7px]" viewBox="0 0 7 7"><path d="M0 1h7" stroke="currentColor" stroke-width="1.500"/><path d="M1 3h5L3.500 6z" fill="currentColor"/></svg></button>
          <button aria-label="Anheften"><svg class="size-[7px]" viewBox="0 0 7 7"><path d="M2 0h3v4H2z" fill="currentColor"/><path d="M1 4h5M3.500 4v3" stroke="currentColor"/></svg></button>
          <button aria-label="Leiste schließen"><svg class="size-[7px]" viewBox="0 0 7 7"><path d="M1 1l5 5M6 1L1 6" stroke="currentColor" stroke-width="1.500"/></svg></button>
        </div>
      </div>
    </main>

    <!-- Right docking strip -->
    <aside class="flex w-[14px] flex-col items-end gap-[6px] border-l border-[#5e5b5f] bg-[#706d70] pt-[5px]">
      <button class="flex min-h-[101px] w-[13px] flex-col items-center gap-[2px] bg-[#c4c0c5] pt-[2px] text-[8px] leading-[13px]"><svg class="size-[11px]" viewBox="0 0 11 11"><circle cx="5.500" cy="5.500" r="5" fill="#2b66b6" stroke="#7fa7db"/><path d="M3.800 4c0-2 3.500-2 3.500 0 0 1.200-1.800 1.200-1.800 2.500M5.500 8v1" fill="none" stroke="#fff" stroke-width="1.300"/></svg><span class="font-['Open_Sans',sans-serif] text-[7px] whitespace-nowrap [writing-mode:vertical-rl]">Solid Edge lernen</span></button>
      <button aria-label="YouTube"><svg class="size-[12px]" viewBox="0 0 12 12"><path d="M0 0h12v6H0z" fill="#d9d3d8"/><path d="M2 1l2 4M5 2v3M8 2l2 3" stroke="#353238"/><path d="M0 6h12v6H0z" fill="#b23349"/><path d="M2 8h8M4 8v3M7 9v2" stroke="#f0ced4"/></svg></button>
      <button class="pt-px" aria-label="Facebook"><svg class="size-[12px]" viewBox="0 0 12 12"><path d="M0 0h12v12H0z" fill="#2c62a8"/><path d="M10 2H8C7 2 7 3 7 4v8M5 6h5" fill="none" stroke="#fff" stroke-width="2"/></svg></button>
      <button class="pt-px" aria-label="Community"><svg class="size-[12px]" viewBox="0 0 12 12"><path d="M0 1h12v10H0z" fill="#dfe6ee"/><path d="M2 3h3v1H3v1h2v1H2" fill="none" stroke="#c9913f"/><path d="M6 4h5M1 8h10M6 6h5" stroke="#7ba1c9"/></svg></button>
    </aside>
  </div>

  <!-- Status bar -->
  <footer class="flex h-[13px] items-center justify-end gap-[2px] bg-linear-to-b from-[#4b494c] to-[#2e2c2f]">
    <input class="h-[11px] w-[76px] bg-[#f6f4f7] px-[3px] font-['Open_Sans',sans-serif] text-[7px] placeholder:text-[#b4afb8]" placeholder="Einen Befehl suchen" aria-label="Einen Befehl suchen">
    <button aria-label="Verkleinern"><svg class="size-[9px]" viewBox="0 0 9 9"><circle cx="4.500" cy="4.500" r="4.500" fill="#c9d7ed"/><path d="M2 4.500h5" stroke="#24406f" stroke-width="1.600"/></svg></button>
    <input type="range" value="46" aria-label="Zoom" class="h-[11px] w-[68px] appearance-none bg-transparent [&::-webkit-slider-runnable-track]:h-px [&::-webkit-slider-runnable-track]:bg-[#c9c6ca] [&::-webkit-slider-thumb]:-mt-[4px] [&::-webkit-slider-thumb]:h-[9px] [&::-webkit-slider-thumb]:w-[6px] [&::-webkit-slider-thumb]:appearance-none [&::-webkit-slider-thumb]:rounded-b-sm [&::-webkit-slider-thumb]:bg-[#8ea7cf]">
    <button aria-label="Vergrößern"><svg class="size-[9px]" viewBox="0 0 9 9"><circle cx="4.500" cy="4.500" r="4.500" fill="#c9d7ed"/><path d="M2 4.500h5M4.500 2v5" stroke="#24406f" stroke-width="1.600"/></svg></button>
    <button class="ml-[2px] flex h-[12px] w-[12px] items-center justify-center border-x border-[#a8a4a8]" aria-label="Aufnehmen"><svg class="size-[8px]" viewBox="0 0 8 8"><circle cx="4" cy="4" r="4" fill="#cf1e2d"/></svg></button>
    <button aria-label="Hochladen"><svg class="size-[10px]" viewBox="0 0 10 10"><path d="M5 0l5 5H7v4H3V5H0z" fill="#4bc23b"/></svg></button>
  </footer>
</div>
</body>
</html>
